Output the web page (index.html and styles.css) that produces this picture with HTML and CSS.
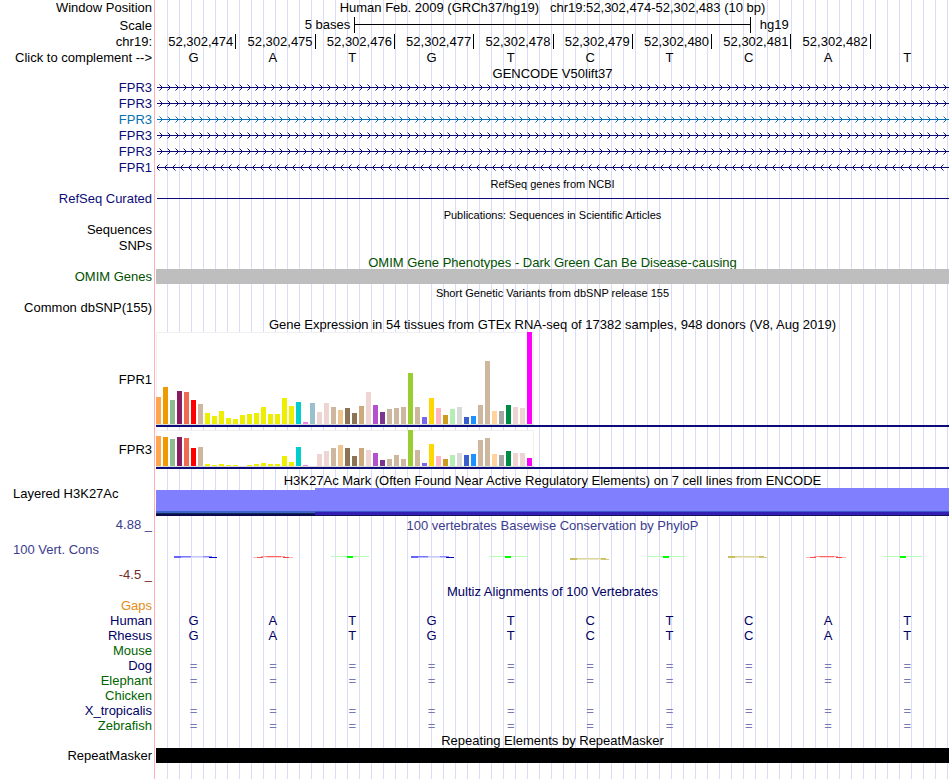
FILE: index.html
```
<!DOCTYPE html>
<html lang="en">
<head>
<meta charset="utf-8">
<title>Genome Browser chr19:52,302,474-52,302,483</title>
<link rel="stylesheet" href="styles.css">
</head>
<body>
<svg class="defs" width="0" height="0" aria-hidden="true">
  <defs>
    <pattern id="fwd" x="2" y="0" width="8" height="16" patternUnits="userSpaceOnUse">
      <path d="M2 5h1v1h-1zM3 6h1v1h-1zM3 8h1v1h-1zM2 9h1v1h-1z" fill="#0c0c78"/>
      <path d="M1 4h1v1h-1zM1 10h1v1h-1z" fill="#8585bb"/>
    </pattern>
    <pattern id="fwd-light" x="2" y="0" width="8" height="16" patternUnits="userSpaceOnUse">
      <path d="M2 5h1v1h-1zM3 6h1v1h-1zM3 8h1v1h-1zM2 9h1v1h-1z" fill="#0870b0"/>
      <path d="M1 4h1v1h-1zM1 10h1v1h-1z" fill="#83b7d7"/>
    </pattern>
    <pattern id="rev" x="0" y="0" width="8" height="16" patternUnits="userSpaceOnUse">
      <path d="M2 5h1v1h-1zM1 6h1v1h-1zM1 8h1v1h-1zM2 9h1v1h-1z" fill="#0c0c78"/>
      <path d="M3 4h1v1h-1zM3 10h1v1h-1z" fill="#8585bb"/>
    </pattern>
  </defs>
</svg>
<main class="browser">
  <div class="row"><div class="label">Window Position</div><div class="title">Human Feb. 2009 (GRCh37/hg19) &nbsp; chr19:52,302,474-52,302,483 (10 bp)</div></div>
  <div class="row scale-row"><div class="label">Scale</div><div class="scale"><span class="scale-name">5 bases</span><span class="scale-bar"></span><span class="scale-db">hg19</span></div></div>
  <div class="row"><div class="label">chr19:</div><div class="bases coords"><span>52,302,474</span><span>52,302,475</span><span>52,302,476</span><span>52,302,477</span><span>52,302,478</span><span>52,302,479</span><span>52,302,480</span><span>52,302,481</span><span>52,302,482</span><span></span></div></div>
  <div class="row"><div class="label">Click to complement --&gt;</div><div class="bases letters"><span>G</span><span>A</span><span>T</span><span>G</span><span>T</span><span>C</span><span>T</span><span>C</span><span>A</span><span>T</span></div></div>

  <div class="row first-title"><div class="title">GENCODE V50lift37</div></div>
  <div class="row"><div class="label navy">FPR3</div><svg class="gene" shape-rendering="crispEdges"><rect x="1" y="7" width="100%" height="1" fill="#0c0c78"/><rect width="100%" height="16" fill="url(#fwd)"/></svg></div>
  <div class="row"><div class="label navy">FPR3</div><svg class="gene" shape-rendering="crispEdges"><rect x="1" y="7" width="100%" height="1" fill="#0c0c78"/><rect width="100%" height="16" fill="url(#fwd)"/></svg></div>
  <div class="row"><div class="label sky">FPR3</div><svg class="gene" shape-rendering="crispEdges"><rect x="1" y="7" width="100%" height="1" fill="#0870b0"/><rect width="100%" height="16" fill="url(#fwd-light)"/></svg></div>
  <div class="row"><div class="label navy">FPR3</div><svg class="gene" shape-rendering="crispEdges"><rect x="1" y="7" width="100%" height="1" fill="#0c0c78"/><rect width="100%" height="16" fill="url(#fwd)"/></svg></div>
  <div class="row"><div class="label navy">FPR3</div><svg class="gene" shape-rendering="crispEdges"><rect x="1" y="7" width="100%" height="1" fill="#0c0c78"/><rect width="100%" height="16" fill="url(#fwd)"/></svg></div>
  <div class="row"><div class="label navy">FPR1</div><svg class="gene" shape-rendering="crispEdges"><rect x="1" y="7" width="100%" height="1" fill="#0c0c78"/><rect width="100%" height="16" fill="url(#rev)"/></svg></div>

  <div class="row title-row small"><div class="title">RefSeq genes from NCBI</div></div>
  <div class="row"><div class="label navy">RefSeq Curated</div><svg class="gene" shape-rendering="crispEdges"><rect x="1" y="7" width="100%" height="1" fill="#0c0c78"/></svg></div>

  <div class="row title-row small"><div class="title">Publications: Sequences in Scientific Articles</div></div>
  <div class="row"><div class="label">Sequences</div></div>
  <div class="row"><div class="label">SNPs</div></div>

  <div class="row title-row low green"><div class="title">OMIM Gene Phenotypes - Dark Green Can Be Disease-causing</div></div>
  <div class="row tight"><div class="label green">OMIM Genes</div><div class="block gray"></div></div>

  <div class="row low small"><div class="title">Short Genetic Variants from dbSNP release 155</div></div>
  <div class="row"><div class="label">Common dbSNP(155)</div></div>

  <div class="row low"><div class="title">Gene Expression in 54 tissues from GTEx RNA-seq of 17382 samples, 948 donors (V8, Aug 2019)</div></div>
  <div class="row chart-row tall"><div class="label">FPR1</div><div class="chart"><svg id="fpr1" width="378" height="93" shape-rendering="crispEdges" role="img" aria-label="FPR1 expression"></svg></div></div>
  <div class="row chart-row"><div class="label">FPR3</div><div class="chart"><svg id="fpr3" width="378" height="37" shape-rendering="crispEdges" role="img" aria-label="FPR3 expression"></svg></div></div>

  <div class="row histone-title"><div class="title">H3K27Ac Mark (Often Found Near Active Regulatory Elements) on 7 cell lines from ENCODE</div></div>
  <div class="row histone-row"><div class="label left">Layered H3K27Ac</div><div class="histone"><span class="histone-low"></span><span class="histone-high"></span></div></div>

  <div class="row cons-row">
    <div class="label cons-label"><span class="indigo">4.88 _</span><span class="indigo left">100 Vert. Cons</span><span class="maroon">-4.5 _</span></div>
    <div class="cons"><div class="title indigo">100 vertebrates Basewise Conservation by PhyloP</div><div class="bases marks" id="marks"></div></div>
  </div>

  <div class="row title-row low"><div class="title blue">Multiz Alignments of 100 Vertebrates</div></div>
  <div class="row tight"><div class="label orange">Gaps</div></div>
  <div class="row tight blue"><div class="label">Human</div><div class="bases letters"><span>G</span><span>A</span><span>T</span><span>G</span><span>T</span><span>C</span><span>T</span><span>C</span><span>A</span><span>T</span></div></div>
  <div class="row tight blue"><div class="label">Rhesus</div><div class="bases letters"><span>G</span><span>A</span><span>T</span><span>G</span><span>T</span><span>C</span><span>T</span><span>C</span><span>A</span><span>T</span></div></div>
  <div class="row tight"><div class="label leaf">Mouse</div></div>
  <div class="row tight"><div class="label blue">Dog</div><div class="bases letters equal"><span>=</span><span>=</span><span>=</span><span>=</span><span>=</span><span>=</span><span>=</span><span>=</span><span>=</span><span>=</span></div></div>
  <div class="row tight"><div class="label leaf">Elephant</div><div class="bases letters equal"><span>=</span><span>=</span><span>=</span><span>=</span><span>=</span><span>=</span><span>=</span><span>=</span><span>=</span><span>=</span></div></div>
  <div class="row tight"><div class="label leaf">Chicken</div></div>
  <div class="row tight"><div class="label blue">X_tropicalis</div><div class="bases letters equal"><span>=</span><span>=</span><span>=</span><span>=</span><span>=</span><span>=</span><span>=</span><span>=</span><span>=</span><span>=</span></div></div>
  <div class="row tight"><div class="label leaf">Zebrafish</div><div class="bases letters equal"><span>=</span><span>=</span><span>=</span><span>=</span><span>=</span><span>=</span><span>=</span><span>=</span><span>=</span><span>=</span></div></div>

  <div class="row title-row"><div class="title">Repeating Elements by RepeatMasker</div></div>
  <div class="row tight"><div class="label">RepeatMasker</div><div class="block black"></div></div>
</main>
<script src="script.js"></script>
</body>
</html>
```
FILE: styles.css
```
* { box-sizing: border-box; }

body {
  margin: 0;
  background: #fff;
  color: #000;
  font: 13px/16px "Liberation Sans", Arial, sans-serif;
}

.defs { position: absolute; }

/* Pink divider and light guide lines run behind every track. */
.browser {
  min-height: 100vh;
  padding-right: 1px;
  background:
    linear-gradient(#ffb0b0, #ffb0b0) 154px 0 / 1px 100% no-repeat,
    repeating-linear-gradient(90deg, #dcdcf8 0 1px, transparent 1px 12px) 167px 0 / 100% 100% no-repeat;
}

.row {
  display: grid;
  grid-template-columns: 152px minmax(0, 1fr);
  column-gap: 4px;
  height: 16px;
  white-space: nowrap;
}
.row > :not(.label) { grid-column: 2; }
.title-row { height: 15px; }
.first-title { height: 14px; }
.tight { height: 15px; line-height: 15px; }
.low { line-height: 18px; }
.small { font-size: 11px; }

.label { text-align: right; }
.title { text-align: center; }
.left { text-align: left; padding-left: 13px; }

.navy { color: #0c0c78; }
.sky { color: #0870b0; }
.green { color: #005000; }
.leaf { color: #006400; }
.blue { color: #000064; }
.indigo { color: #3c3c8c; }
.maroon { color: #782828; }
.orange { color: #e68c14; }

.bases {
  display: grid;
  grid-template-columns: repeat(10, minmax(0, 1fr));
}
.letters span { text-align: center; padding-right: 4px; }
.equal { color: #7878b4; }
.coords span { height: 15px; text-align: right; padding-right: 2px; }
.coords span + span { border-left: 1px solid #000; }

.scale-row { height: 18px; line-height: 18px; }
.scale-row .label { line-height: 20px; }
.scale {
  display: grid;
  grid-template-columns: 25% 50% 25%;
}
.scale-name { text-align: right; padding-right: 4px; }
.scale-bar {
  height: 16px;
  margin-top: 1px;
  border: solid #000;
  border-width: 0 1px;
  background: linear-gradient(#000, #000) 0 7px / 100% 1px no-repeat;
}
.scale-db { padding-left: 9px; }

.gene { display: block; width: 100%; height: 16px; }
.block { height: 15px; }
.gray { background: #bebebe; }
.black { background: #000; }

.chart-row { height: 39px; line-height: 39px; }
.tall { height: 95px; line-height: 95px; margin-bottom: 3px; }
.chart { border-bottom: 2px solid #0c0c78; }
.chart svg { display: block; background: #fff; }

.histone-title { height: 19px; padding-top: 4px; }
.histone-row { height: 28px; line-height: 12px; }
.histone {
  display: grid;
  grid-template-columns: 20% 80%;
}
.histone-low {
  margin-top: 2px;
  background: linear-gradient(#8080ff 21px, #3c64c8 21px 23px, #14285a 23px 24px, #0a0a50 24px);
}
.histone-high {
  background: linear-gradient(#8080ff 23px, #3c5ac8 23px 24px, #321eb4 24px 27px, #14145a 27px);
}

.cons-row { height: 67px; }
.cons-label {
  display: flex;
  flex-direction: column;
  justify-content: space-between;
  padding-top: 1px;
}
.cons { padding-top: 2px; }
.marks { margin-top: 20px; padding-right: 4px; }
.marks svg { display: block; justify-self: center; }
```
FILE: script.js
```
const SVG_NS = "http://www.w3.org/2000/svg";

function rect(parent, x, y, width, height, fill) {
  const node = document.createElementNS(SVG_NS, "rect");
  const attrs = { x, y, width, height, fill };
  for (const key in attrs) node.setAttribute(key, attrs[key]);
  parent.appendChild(node);
}

// One colour per tissue, in display order.
const tissueColors = (
  "FFA54F EE9A00 8FBC8F 8B1C62 EE6A50 FF0000 CDB79E " +
  "EEEE00 EEEE00 EEEE00 EEEE00 EEEE00 EEEE00 EEEE00 EEEE00 EEEE00 EEEE00 EEEE00 EEEE00 EEEE00 " +
  "00CDCD EE82EE 9AC0CD EED5D2 EED5D2 CDB79E EEC591 8B7355 8B7355 CDAA7D EED5D2 B452CD 7A378B " +
  "CDB79E CDB79E CDB79E 9ACD32 CDB79E 7A67EE FFD700 FFB6C1 CD9B1D B4EEB4 D9D9D9 3A5FCD 1E90FF " +
  "CDB79E CDB79E FFD39B A6A6A6 008B45 EED5D2 EED5D2 FF00FF"
).split(" ");

const expression = {
  fpr1: [27, 37, 24, 33, 32, 24, 20, 11, 8, 13, 6, 5, 9, 10, 11, 17, 10, 10, 26, 18, 22, 2, 21, 12, 21, 17, 14,
    16, 11, 18, 32, 19, 12, 15, 16, 17, 51, 17, 7, 26, 16, 9, 15, 17, 7, 8, 19, 63, 13, 13, 19, 17, 16, 92],
  fpr3: [30, 29, 27, 29, 28, 18, 19, 2, 1, 2, 1, 1, 0, 1, 2, 3, 2, 2, 10, 4, 19, 1, 0, 12, 15, 18, 21,
    18, 10, 18, 16, 13, 6, 7, 11, 7, 36, 16, 3, 22, 10, 7, 11, 13, 11, 12, 26, 28, 12, 11, 15, 13, 13, 8]
};

for (const id in expression) {
  const svg = document.getElementById(id);
  const width = svg.width.baseVal.value;
  const base = svg.height.baseVal.value - 1;
  rect(svg, 0, 0, width, 1, "#f0f0f0");
  rect(svg, 0, 0, 1, base, "#f0f0f0");
  rect(svg, width - 1, 0, 1, base, "#f0f0f0");
  rect(svg, 0, base, width, 1, "#dcdcdc");
  expression[id].forEach((h, i) => rect(svg, i * 7, base - h, 5, h, "#" + tissueColors[i]));
}

// Conservation marks: [x, y, width, height, fill] inside a 44x8 box.
const marks = {
  G: [[1, 2, 7, 2, "#6464ff"], [8, 2, 10, 1, "#7878ff"], [8, 3, 10, 1, "#b4b4ff"], [18, 2, 12, 1, "#c8c8ff"],
    [18, 3, 12, 1, "#dcdcff"], [30, 2, 9, 1, "#8c8cff"], [30, 3, 6, 1, "#c8c8ff"], [36, 3, 8, 1, "#0000c8"]],
  A: [[1, 3, 4, 1, "#ffb4b4"], [5, 3, 6, 1, "#ff5050"], [9, 2, 6, 1, "#ff9696"], [14, 2, 16, 1, "#ff6464"],
    [15, 3, 14, 1, "#ffd2d2"], [29, 2, 4, 1, "#ffa0a0"], [31, 3, 6, 1, "#ff3c3c"], [37, 3, 4, 1, "#ffb4b4"]],
  T: [[0, 2, 38, 1, "#b4ffb4"], [16, 2, 6, 2, "#00ff00"]],
  C: [[2, 2, 7, 2, "#c8be5a"], [9, 2, 24, 1, "#dcd7a0"], [9, 3, 24, 1, "#ebe6c8"], [33, 2, 5, 1, "#c8be64"],
    [33, 3, 8, 1, "#d2c878"]]
};

const row = document.getElementById("marks");
[..."GATGTCTCAT"].forEach((letter, i) => {
  const svg = document.createElementNS(SVG_NS, "svg");
  svg.setAttribute("width", 44);
  svg.setAttribute("height", 8);
  svg.setAttribute("overflow", "visible");
  svg.setAttribute("shape-rendering", "crispEdges");
  const dy = i === 5 ? 2 : 0;
  marks[letter].forEach(([x, y, w, h, fill]) => rect(svg, x, y + dy, w, h, fill));
  row.appendChild(svg);
});
```
